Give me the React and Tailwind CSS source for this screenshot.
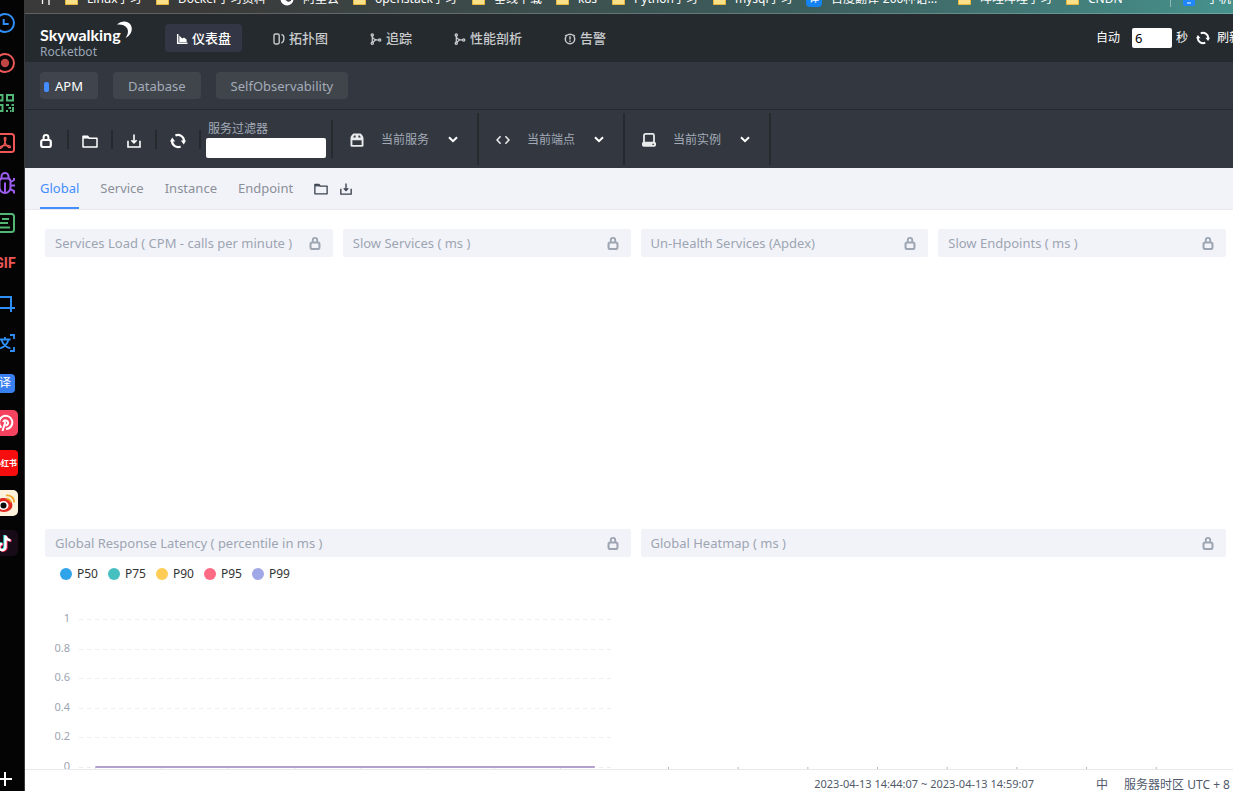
import { useState } from 'react';
import clsx from 'clsx';

/* ---------- icons ---------- */

function LockIcon({ className }) {
  return (
    <svg viewBox="0 0 12 14" className={className} fill="none" stroke="currentColor" aria-hidden="true">
      <rect x="1.2" y="6" width="9.6" height="7" rx="1.8" strokeWidth="2.2" />
      <path d="M3.6 6V3.4a2.4 2.4 0 0 1 4.8 0V6" strokeWidth="2" />
    </svg>
  );
}

function FolderIcon({ className }) {
  return (
    <svg viewBox="0 0 16 13" className={className} fill="none" stroke="currentColor" strokeWidth="1.5" strokeLinejoin="round" aria-hidden="true">
      <path d="M1 12V1.2h4.6l1.6 2H15V12z" />
      <path d="M1 2.8h6" />
    </svg>
  );
}

function DownloadIcon({ className }) {
  return (
    <svg viewBox="0 0 14 14" className={className} fill="none" stroke="currentColor" strokeWidth="1.6" aria-hidden="true">
      <path d="M1 6.8v6.2h12V6.8" />
      <path d="M7 .5v8M4.4 6.2 7 8.8l2.6-2.6" />
    </svg>
  );
}

function RefreshIcon({ className }) {
  return (
    <svg viewBox="0 0 16 16" className={className} fill="none" stroke="currentColor" strokeWidth="2.2" aria-hidden="true">
      <path d="M5.4 2.6A6 6 0 0 1 14 8" />
      <path d="M10.6 13.4A6 6 0 0 1 2 8" />
      <path d="M0 8.400h5.200L2.200 4.600zM16 7.600h-5.200l3 3.800z" fill="currentColor" stroke="none" />
    </svg>
  );
}

function ChevronIcon() {
  return (
    <svg viewBox="0 0 10 7" className="w-[10px] h-[7px] text-white" fill="none" stroke="currentColor" strokeWidth="2" aria-hidden="true">
      <path d="m1 1.2 4 4 4-4" />
    </svg>
  );
}

const navIcons = {
  chart: (
    <>
      <path d="M1.700 1v9.300H11.500" fill="none" stroke="currentColor" strokeWidth="1.500" />
      <path d="M3.300 9V2.600l2.900 2.800L8 4.400l2.600 2.200V9z" fill="currentColor" />
    </>
  ),
  topology: (
    <g fill="none" stroke="currentColor" strokeWidth="1.400">
      <rect x="1" y="1" width="5.200" height="10" rx="1.400" />
      <path d="M8.400 1.600c1.600.2 2.400 1 2.400 2.400v2.600c0 1.800-.9 2.800-2.400 3.400" />
    </g>
  ),
  trace: (
    <g fill="none" stroke="currentColor" strokeWidth="1.300">
      <circle cx="2.300" cy="1.900" r="1.100" />
      <circle cx="2.300" cy="10.200" r="1.100" />
      <circle cx="9.700" cy="7" r="1.100" />
      <path d="M2.300 3v6M2.400 4c.8 2 3 3 6.200 3M2.800 9.200l3.400-2.600" />
    </g>
  ),
  alarm: (
    <g fill="none" stroke="currentColor" strokeWidth="1.500">
      <circle cx="6" cy="6" r="4.700" />
      <path d="M6 3.200v3.400M6 7.600v1.300" />
      <path d="M2.200 1.600 1 3M9.800 1.600 11 3" strokeWidth="1" />
    </g>
  ),
};

const selectorIcons = {
  service: (
    <svg viewBox="0 0 14 14" className="w-[14px] h-[14px]" fill="currentColor" aria-hidden="true">
      <path fillRule="evenodd" d="M4.200.4h5.600c1.700 0 3.700 2.800 3.700 4.800v7.200a1.400 1.400 0 0 1-1.400 1.400H1.900A1.400 1.400 0 0 1 .5 12.400V5.200C.5 3.200 2.500.4 4.200.4zM2.400 7.200v4.700h9.200V7.200zM4.200 2.400 3.200 4.600h2.400V2.400zm4.200 0v2.200h2.400l-1-2.200z" />
    </svg>
  ),
  endpoint: (
    <svg viewBox="0 0 14 14" className="w-[14px] h-[14px]" fill="none" stroke="currentColor" strokeWidth="1.600" aria-hidden="true">
      <path d="M4.600 3.200 1 7l3.600 3.800M9.400 3.200 13 7l-3.600 3.800" />
    </svg>
  ),
  instance: (
    <svg viewBox="0 0 14 14" className="w-[14px] h-[14px]" fill="currentColor" aria-hidden="true">
      <path d="M2 9V2.400A1.500 1.500 0 0 1 3.500.9h7A1.500 1.500 0 0 1 12 2.400V9" fill="none" stroke="currentColor" strokeWidth="1.800" />
      <path fillRule="evenodd" d="M1.800 8.800h10.400a1.800 1.800 0 0 1 1.800 1.800v1.400a1.800 1.800 0 0 1-1.800 1.800H1.800A1.800 1.800 0 0 1 0 12v-1.400a1.800 1.800 0 0 1 1.800-1.800zm8.600 1.900v1.300h1.500v-1.300z" />
    </svg>
  ),
};

/* ---------- side launcher ---------- */

const launcherItems = [
  {
    label: '时钟',
    icon: (
      <svg viewBox="0 0 20 20" className="w-5 h-5" fill="none" stroke="#2f8ff7" strokeWidth="2">
        <circle cx="10" cy="10" r="9" />
        <path d="M8.700 6v5h5" />
      </svg>
    ),
  },
  {
    label: '录制',
    icon: (
      <svg viewBox="0 0 20 20" className="w-5 h-5">
        <circle cx="10" cy="10" r="9" fill="none" stroke="#ef5757" strokeWidth="2" />
        <circle cx="10" cy="10" r="4.200" fill="#c04545" />
      </svg>
    ),
  },
  {
    label: '二维码',
    icon: (
      <svg viewBox="0 0 20 20" className="w-5 h-5" fill="none" stroke="#52b776" strokeWidth="2">
        <path d="M2 2h5.500v5.500H2zM12 2h6v5.500h-6zM2 12h5.500v6H2z" />
        <path d="M11 12h3M16.500 12H19M13.500 15H16M11 18h2M15 18h1.500M18 14v5" />
      </svg>
    ),
  },
  {
    label: 'PDF',
    icon: (
      <svg viewBox="0 0 20 20" className="w-5 h-5" fill="none" stroke="#ef5757">
        <rect x="1" y="1" width="18" height="18" rx="2.500" strokeWidth="2" />
        <path d="M10 4.500c1.500 0 1 2 .2 4.200C9.200 11.300 7 15.500 5 15.500c-1.500 0-.6-2.300 4-3 4-.8 7 .4 6.500 1.800-.6 1.200-3.500-.3-5-3.800C9.500 8.200 8.700 4.500 10 4.500z" strokeWidth="1.300" />
      </svg>
    ),
  },
  {
    label: '调试',
    icon: (
      <svg viewBox="0 0 20 22" className="w-5 h-[22px]" fill="none" stroke="#9c5cf0" strokeWidth="2">
        <path d="M4.500 9.500C4.500 7.500 6 6.500 7.500 6.500h5c1.500 0 3 1 3 3V15c0 3.500-2.500 6-5.500 6s-5.500-2.500-5.500-6z" />
        <path d="M6.500 6V4.500a3.500 3.500 0 0 1 7 0V6M10 10.500V20M4.500 13.500H0M20 13.500h-4.500M4.500 10 1 8V6M15.500 10 19 8V6M5 17l-4 2v2.500M15 17l4 2v2.500" />
      </svg>
    ),
  },
  {
    label: '文档',
    icon: (
      <svg viewBox="0 0 20 20" className="w-5 h-5" fill="none" stroke="#52b776" strokeWidth="2">
        <rect x="1" y="1" width="18" height="18" rx="2.500" />
        <path d="M7 6h7M5 10h8M5 14.500h10" />
      </svg>
    ),
  },
  { label: 'GIF', icon: <span className="font-['Roboto',sans-serif] text-sm font-bold text-[#ef5757]">GIF</span> },
  {
    label: '截图',
    icon: (
      <svg viewBox="0 0 20 20" className="w-5 h-5" fill="none" stroke="#2f8ff7" strokeWidth="2">
        <path d="M4 0v15h16M0 4h16v15" />
      </svg>
    ),
  },
  {
    label: '文字识别',
    icon: (
      <svg viewBox="0 0 20 20" className="w-5 h-5" fill="none" stroke="#2f8ff7" strokeWidth="1.800">
        <path d="M1 6V2h4M15 2h4v4M19 14v4h-4M5 18H1v-4M4.500 6.500h11M10 4v2.500M13.500 6.500C12.500 11 9 14 5 15.500M6.500 6.500c1 4.500 4.500 7.500 9 9" />
      </svg>
    ),
  },
  {
    label: '翻译',
    icon: <span className="flex w-5 h-[19px] items-center justify-center rounded-sm bg-[#3a7ff0] text-xs text-white">译</span>,
  },
  {
    label: 'P',
    icon: (
      <svg viewBox="0 0 26 26" className="w-[26px] h-[26px]">
        <rect width="26" height="26" rx="5" fill="#f5425e" />
        <path d="M9.500 17.500A6.600 6.600 0 1 1 14 19M10.500 21l3-9.500M13.500 15.500a2.600 2.600 0 1 0-2.400-3.500" fill="none" stroke="#fff" strokeWidth="2" />
      </svg>
    ),
  },
  {
    label: '小红书',
    icon: <span className="flex w-[26px] h-[26px] shrink-0 items-center justify-center whitespace-nowrap rounded bg-[#f60d0d] text-[8px] font-bold text-white">小红书</span>,
  },
  {
    label: '微博',
    icon: (
      <svg viewBox="0 0 26 26" className="w-[26px] h-[26px]">
        <rect width="26" height="26" rx="5" fill="#fdf3dc" />
        <ellipse cx="12" cy="15" rx="8.500" ry="7" fill="#e02a21" />
        <path d="M9 8c2 0 4 1 4 2h5l-1 3H8z" fill="#e02a21" />
        <ellipse cx="11.500" cy="15.500" rx="5" ry="4.400" fill="#fff" />
        <circle cx="11.500" cy="15.500" r="3" fill="#0b0b0b" />
        <path d="M14 5.500c4.500-.8 8.500 2.500 8 7M14.500 9c2.500-.3 4.300 1.300 4.300 3.500" fill="none" stroke="#f0a42c" strokeWidth="1.700" />
      </svg>
    ),
  },
  {
    label: '抖音',
    icon: (
      <svg viewBox="0 0 26 26" className="w-[26px] h-[26px]" fill="none" strokeWidth="2.400">
        <rect width="26" height="26" rx="5" fill="#170b17" />
        <path d="M12.500 5v11.500a3.200 3.200 0 1 1-3.200-3.200M12.500 5.500c.5 2.500 2.300 4 5 4.200" stroke="#2ee6e0" />
        <path d="M14.500 6v11.500a3.200 3.200 0 1 1-3.200-3.200M14.500 6.500c.5 2.500 2.300 4 5 4.200" stroke="#f52c56" />
        <path d="M13.500 5.500V17a3.200 3.200 0 1 1-3.200-3.200M13.500 6c.5 2.500 2.300 4 5 4.200" stroke="#fff" />
      </svg>
    ),
  },
];

function Launcher() {
  return (
    <aside className="w-[25px] shrink-0 overflow-hidden border-r border-[#3a3a3c] bg-[#040404]">
      <div className="flex h-full w-[38px] -ml-[14px] flex-col items-center pt-[3px] pb-1">
        {launcherItems.map(item => (
          <button key={item.label} type="button" aria-label={item.label} className="flex h-10 w-full shrink-0 items-center justify-center">
            {item.icon}
          </button>
        ))}
        <button type="button" aria-label="添加" className="mt-auto text-white">
          <svg viewBox="0 0 16 16" className="w-4 h-4" stroke="currentColor" strokeWidth="2">
            <path d="M8 1v14M1 8h14" />
          </svg>
        </button>
      </div>
    </aside>
  );
}

/* ---------- bookmarks ---------- */

const bookmarks = [
  { name: 'Linux学习', width: 'w-[91px]' },
  { name: 'Docker学习资料', width: 'w-[124px]' },
  { name: '阿里云', width: 'w-[73px]', icon: 'globe' },
  { name: 'openstack学习', width: 'w-[119px]' },
  { name: '垂线下载', width: 'w-[84px]' },
  { name: 'k8s', width: 'w-[56px]' },
  { name: 'Python学习', width: 'w-[101px]' },
  { name: 'mysql学习', width: 'w-[93px]' },
  { name: '百度翻译-200种语...', width: 'w-[152px]', icon: 'translate' },
  { name: '哔哩哔哩学习', width: 'w-[108px]' },
  { name: 'CNDN', width: 'w-[104px]' },
];

function BookmarkIcon({ type }) {
  if (type === 'globe') {
    return (
      <svg viewBox="0 0 14 14" className="w-[14px] h-[14px] shrink-0">
        <circle cx="7" cy="7" r="6.500" fill="#fff" />
        <path d="M3 4.500c2-2 4-1 4 .5s3 1 4 2.500-2 3-3.500 2S3.500 7 3 4.500z" fill="#444" />
      </svg>
    );
  }
  if (type === 'translate') {
    return <span className="flex w-4 h-4 shrink-0 items-center justify-center rounded-sm bg-[#1482f0] text-[10px]">译</span>;
  }
  return (
    <svg viewBox="0 0 13 12" className="w-[13px] h-3 shrink-0">
      <path d="M.5 1.500h4l1.500 1.500h6.500v8.500H.5z" fill="#fbe08a" stroke="#e8b93c" />
    </svg>
  );
}

function BookmarkBar() {
  return (
    <nav aria-label="书签" className="flex h-[14px] shrink-0 items-end overflow-hidden border-b border-white/20 bg-linear-to-r from-[#3a3a3a] from-15% via-[#3c5f5e] via-65% to-[#46918c] text-xs text-white">
      <div className="flex h-7 w-full items-center pl-[15px]">
        <svg viewBox="0 0 12 12" className="w-3 h-3 shrink-0 mr-[13px]" fill="none" stroke="#fff" strokeWidth="1.300">
          <path d="M0 5.500h4M2.500 11V4M9 12V1" />
        </svg>
        {bookmarks.map(b => (
          <a key={b.name} href="#" className={clsx('flex shrink-0 items-center gap-[9px] whitespace-nowrap', b.width)}>
            <BookmarkIcon type={b.icon} />
            {b.name}
          </a>
        ))}
        <span className="mr-3 h-4 w-px shrink-0 bg-white/40" />
        <a href="#" className="flex shrink-0 items-center gap-3 whitespace-nowrap">
          <svg viewBox="0 0 12 16" className="w-3 h-4">
            <rect width="12" height="15" rx="2" fill="#1f86ff" />
            <path d="M4 12h4" stroke="#fff" />
          </svg>
          手机
        </a>
      </div>
    </nav>
  );
}

/* ---------- header ---------- */

const navItems = [
  { name: '仪表盘', icon: 'chart' },
  { name: '拓扑图', icon: 'topology' },
  { name: '追踪', icon: 'trace' },
  { name: '性能剖析', icon: 'trace' },
  { name: '告警', icon: 'alarm' },
];

function Logo() {
  return (
    <a href="#" className="flex w-[115px] flex-col pt-2">
      <span className="flex h-5 items-start text-white">
        <span className="font-['Lato',sans-serif] text-base leading-5 font-bold">Skywalking</span>
        <svg viewBox="0 0 16 20" className="-ml-1 -mt-1 w-4 h-5 shrink-0" fill="currentColor" aria-hidden="true">
          <path d="M0 3.500C4-.5 11-1 13.800 4c2.400 4.500.5 10-5.300 13 2.500-3.500 3.300-7 1.500-10C8 4 4 3 0 3.500z" />
        </svg>
      </span>
      <span className="text-xs leading-[14px] text-[#9aa6b5]">Rocketbot</span>
    </a>
  );
}

function Header() {
  const [seconds, setSeconds] = useState('6');

  return (
    <header className="flex h-12 shrink-0 items-center bg-[#252a2f] pl-[15px]">
      <Logo />
      <nav className="ml-[10px] flex flex-1 gap-5">
        {navItems.map((item, i) => (
          <a
            key={item.name}
            href="#"
            className={clsx(
              'flex h-7 items-center gap-1 rounded px-[11px] pt-px text-[13px] font-medium',
              i === 0 ? 'bg-[#333745] text-white' : 'text-[#c8cacc]'
            )}
          >
            <svg viewBox="0 0 12 12" className="w-3 h-3" aria-hidden="true">{navIcons[item.icon]}</svg>
            {item.name}
          </a>
        ))}
      </nav>
      <div className="-mr-2 flex shrink-0 items-center text-xs text-white">
        <label htmlFor="auto-refresh" className="mr-3">自动</label>
        <input
          id="auto-refresh"
          value={seconds}
          onChange={e => setSeconds(e.target.value)}
          className="h-5 w-10 rounded-xs bg-white px-[3px] text-[13px] text-black outline-none"
        />
        <span className="ml-1 mr-2">秒</span>
        <button type="button" className="flex items-center gap-[7px]">
          <RefreshIcon className="w-[14px] h-[14px]" />
          刷新
        </button>
      </div>
    </header>
  );
}

/* ---------- toolbars ---------- */

const groups = ['APM', 'Database', 'SelfObservability'];

function GroupBar() {
  return (
    <div className="flex h-12 shrink-0 items-center gap-[15px] border-b border-[#252a2f] bg-[#333840] pl-[15px] text-[13px]">
      {groups.map((name, i) => (
        <button
          key={name}
          type="button"
          className={clsx(
            'flex h-[27px] items-center rounded pt-[2px]',
            i === 0 ? 'gap-[6px] bg-[#40454d] pl-1 pr-[15px] text-white' : 'bg-[#40454c] px-[15px] text-[#a3abb8]'
          )}
        >
          {i === 0 && <span className="h-[10px] w-[5px] rounded-xs bg-[#448dfe]" />}
          {name}
        </button>
      ))}
    </div>
  );
}

const selectors = [
  { name: '当前服务', icon: 'service' },
  { name: '当前端点', icon: 'endpoint' },
  { name: '当前实例', icon: 'instance' },
];

const tools = [
  { name: '锁定', icon: <LockIcon className="w-3 h-[14px]" /> },
  { name: '模板', icon: <FolderIcon className="w-4 h-[13px]" /> },
  { name: '导出', icon: <DownloadIcon className="w-[14px] h-[14px]" /> },
  { name: '刷新', icon: <RefreshIcon className="w-4 h-4" /> },
];

function ToolBar() {
  return (
    <div className="flex h-[58px] shrink-0 items-center bg-[#333840] text-xs text-white">
      {tools.map(tool => (
        <div key={tool.name} className="flex h-[19px] w-11 items-center justify-center border-r-2 border-[#252a2f] pt-1">
          <button type="button" aria-label={tool.name}>{tool.icon}</button>
        </div>
      ))}
      <div className="flex h-[38px] flex-col border-r-2 border-[#252a2f] px-[5px]">
        <label htmlFor="service-filter" className="pl-[2px] leading-[18px] text-[#a3abb8]">服务过滤器</label>
        <input id="service-filter" className="h-5 w-[120px] rounded-xs bg-white px-1 text-black outline-none" />
      </div>
      {selectors.map(s => (
        <button key={s.name} type="button" className="flex h-[52px] w-[146px] items-center border-r-2 border-[#252a2f] pl-[17px] pr-[19px] pt-px text-[#e8eaec]">
          {selectorIcons[s.icon]}
          <span className="ml-[17px] flex-1 text-left text-[#a3abb8]">{s.name}</span>
          <ChevronIcon />
        </button>
      ))}
    </div>
  );
}

const tabs = ['Global', 'Service', 'Instance', 'Endpoint'];

function TabBar() {
  const [active, setActive] = useState('Global');

  return (
    <div className="flex h-[42px] shrink-0 items-center gap-[21px] border-b border-[#e8e9ec] bg-[#f2f3f9] pl-[15px] text-[13px]">
      {tabs.map(tab => (
        <button
          key={tab}
          type="button"
          onClick={() => setActive(tab)}
          className={clsx('h-full border-b-2 pt-[2px]', tab === active ? 'border-[#448dfe] text-[#448dfe]' : 'border-transparent text-[#8a8f98]')}
        >
          {tab}
        </button>
      ))}
      <div className="flex items-center gap-3 pt-px text-[#3d444f]">
        <button type="button" aria-label="打开"><FolderIcon className="w-[14px] h-3" /></button>
        <button type="button" aria-label="下载"><DownloadIcon className="w-3 h-3" /></button>
      </div>
    </div>
  );
}

/* ---------- dashboard ---------- */

function Panel({ title, className, children }) {
  return (
    <section className={clsx('flex h-[290px] flex-col', className)}>
      <h2 className="flex h-7 shrink-0 items-center justify-between rounded-xs bg-[#f2f3f9] pl-[10px] pr-3 pt-px text-[13px] text-[#9da5b2]">
        {title}
        <LockIcon className="w-3 h-[13px]" />
      </h2>
      {children}
    </section>
  );
}

const legend = [
  { name: 'P50', color: 'bg-[#30a4eb]' },
  { name: 'P75', color: 'bg-[#45bfc0]' },
  { name: 'P90', color: 'bg-[#ffcc55]' },
  { name: 'P95', color: 'bg-[#ff6a84]' },
  { name: 'P99', color: 'bg-[#a0a7e6]' },
];

const yTicks = ['1', '0.8', '0.6', '0.4', '0.2', '0'];
const xTicks = [0, 1, 2, 3, 4, 5, 6, 7];

function LatencyChart() {
  return (
    <>
      <ul className="flex gap-[10px] pl-[15px] pt-[9px] text-xs text-[#333]">
        {legend.map(l => (
          <li key={l.name} className="flex items-center gap-[5px]">
            <span className={clsx('h-3 w-3 rounded-full', l.color)} />
            {l.name}
          </li>
        ))}
      </ul>
      <svg className="mt-[23px] h-[200px] w-full shrink-0" role="img" aria-label="Global Response Latency">
        {yTicks.map((t, i) => (
          <g key={t}>
            <text x="25" y={17 + Math.round(i * 29.6)} textAnchor="end" className="fill-[#9da5b2] text-[11px]">{t}</text>
            <line x1="34" x2="96.6%" y1={14.5 + Math.round(i * 29.6)} y2={14.5 + Math.round(i * 29.6)} stroke="#ebedf0" strokeDasharray="4 4" />
          </g>
        ))}
        {xTicks.map(i => (
          <line key={i} x1={`${8.6 + i * 11.35}%`} x2={`${8.6 + i * 11.35}%`} y1="162" y2="168" stroke="#e2e4ea" />
        ))}
        <line x1="8.6%" x2="93.9%" y1="162" y2="162" stroke="#b3a0cf" strokeWidth="2" />
      </svg>
    </>
  );
}

function HeatmapChart() {
  return (
    <svg className="mt-auto h-[54px] w-full shrink-0" role="img" aria-label="Global Heatmap">
      {xTicks.map(i => (
        <line key={i} x1={`${4.7 + i * 11.9}%`} x2={`${4.7 + i * 11.9}%`} y1="2" y2="8" stroke="#b4b6bd" />
      ))}
    </svg>
  );
}

function Dashboard() {
  return (
    <main className="min-h-0 flex-1 overflow-hidden px-5 pt-[19px]">
      <div className="-mr-[13px] grid grid-cols-4 gap-[10px]">
        <Panel title="Services Load ( CPM - calls per minute )" />
        <Panel title="Slow Services ( ms )" />
        <Panel title="Un-Health Services (Apdex)" />
        <Panel title="Slow Endpoints ( ms )" />
        <Panel title="Global Response Latency ( percentile in ms )" className="col-span-2">
          <LatencyChart />
        </Panel>
        <Panel title="Global Heatmap ( ms )" className="col-span-2">
          <HeatmapChart />
        </Panel>
      </div>
    </main>
  );
}

function Footer() {
  return (
    <footer className="flex h-[22px] shrink-0 items-center justify-end border-t border-[#e8e9ec] bg-white pt-2 pr-[3px] text-[11px] text-[#515a6b]">
      <time>2023-04-13 14:44:07 ~ 2023-04-13 14:59:07</time>
      <button type="button" className="ml-[62px] text-xs">中</button>
      <span className="ml-[16px] text-xs">服务器时区 UTC + 8</span>
    </footer>
  );
}

export default function App() {
  return (
    <div className="flex h-screen overflow-hidden bg-white font-['Noto_Sans','Noto_Sans_CJK_SC',sans-serif]">
      <Launcher />
      <div className="flex min-w-0 flex-1 flex-col">
        <BookmarkBar />
        <Header />
        <GroupBar />
        <ToolBar />
        <TabBar />
        <Dashboard />
        <Footer />
      </div>
    </div>
  );
}
